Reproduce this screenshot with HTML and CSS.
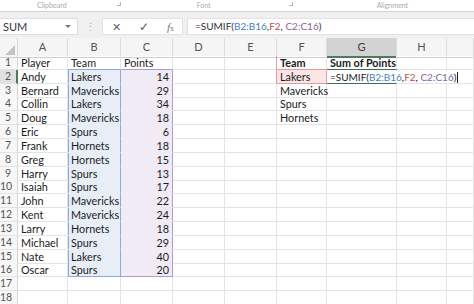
FILE: index.html
```html
<!DOCTYPE html>
<html lang="en">
<head>
    <meta charset="UTF-8">
    <title>SUMIF</title>
    <link rel="stylesheet" href="styles.css">
</head>
<body>
<div class="ribbon">
    <span class="group-label clip">Clipboard</span>
    <span class="launcher l1"></span>
    <span class="group-label font">Font</span>
    <span class="launcher l2"></span>
    <span class="group-label align">Alignment</span>
</div>

<div class="formula-bar">
    <div class="name-box">SUM<span class="arrow"></span></div>
    <div class="dots">⋮</div>
    <div class="fx-buttons">
        <span class="cancel">✕</span>
        <span class="enter">✓</span>
        <span class="fx"><i>f</i><sub>x</sub></span>
    </div>
    <div class="formula-input">=SUMIF(<span class="ref-b">B2:B16</span>,<span class="ref-f">F2</span>, <span class="ref-c">C2:C16</span>)</div>
</div>

<div class="sheet">
    <div class="row head">
        <div class="corner"></div>
        <div class="ch">A</div><div class="ch">B</div><div class="ch">C</div><div class="ch">D</div>
        <div class="ch">E</div><div class="ch">F</div><div class="ch sel">G</div><div class="ch">H</div><div class="ch"></div>
    </div>
    <div class="row">
        <div class="rh">1</div>
        <div class="c">Player</div><div class="c rb-top">Team</div><div class="c rc-top">Points</div><div class="c"></div>
        <div class="c rf-left"></div><div class="c bold rf-top">Team</div><div class="c bold active-top">Sum of Points</div><div class="c"></div><div class="c"></div>
    </div>
    <div class="row">
        <div class="rh sel">2</div>
        <div class="c">Andy</div><div class="c rb">Lakers</div><div class="c rc num">14</div><div class="c"></div>
        <div class="c rf-left"></div><div class="c rf">Lakers</div>
        <div class="c editing"><span class="edit-box">=SUMIF(<span class="ref-b">B2:B16</span>,<span class="ref-f">F2</span>, <span class="ref-c">C2:C16</span>)<span class="caret"></span></span></div>
        <div class="c"></div><div class="c"></div>
    </div>
    <div class="row">
        <div class="rh">3</div>
        <div class="c">Bernard</div><div class="c rb">Mavericks</div><div class="c rc num">29</div><div class="c"></div>
        <div class="c"></div><div class="c">Mavericks</div><div class="c"></div><div class="c"></div><div class="c"></div>
    </div>
    <div class="row">
        <div class="rh">4</div>
        <div class="c">Collin</div><div class="c rb">Lakers</div><div class="c rc num">34</div><div class="c"></div>
        <div class="c"></div><div class="c">Spurs</div><div class="c"></div><div class="c"></div><div class="c"></div>
    </div>
    <div class="row">
        <div class="rh">5</div>
        <div class="c">Doug</div><div class="c rb">Mavericks</div><div class="c rc num">18</div><div class="c"></div>
        <div class="c"></div><div class="c">Hornets</div><div class="c"></div><div class="c"></div><div class="c"></div>
    </div>
    <div class="row">
        <div class="rh">6</div>
        <div class="c">Eric</div><div class="c rb">Spurs</div><div class="c rc num">6</div><div class="c"></div>
        <div class="c"></div><div class="c"></div><div class="c"></div><div class="c"></div><div class="c"></div>
    </div>
    <div class="row">
        <div class="rh">7</div>
        <div class="c">Frank</div><div class="c rb">Hornets</div><div class="c rc num">18</div><div class="c"></div>
        <div class="c"></div><div class="c"></div><div class="c"></div><div class="c"></div><div class="c"></div>
    </div>
    <div class="row">
        <div class="rh">8</div>
        <div class="c">Greg</div><div class="c rb">Hornets</div><div class="c rc num">15</div><div class="c"></div>
        <div class="c"></div><div class="c"></div><div class="c"></div><div class="c"></div><div class="c"></div>
    </div>
    <div class="row">
        <div class="rh">9</div>
        <div class="c">Harry</div><div class="c rb">Spurs</div><div class="c rc num">13</div><div class="c"></div>
        <div class="c"></div><div class="c"></div><div class="c"></div><div class="c"></div><div class="c"></div>
    </div>
    <div class="row">
        <div class="rh">10</div>
        <div class="c">Isaiah</div><div class="c rb">Spurs</div><div class="c rc num">17</div><div class="c"></div>
        <div class="c"></div><div class="c"></div><div class="c"></div><div class="c"></div><div class="c"></div>
    </div>
    <div class="row">
        <div class="rh">11</div>
        <div class="c">John</div><div class="c rb">Mavericks</div><div class="c rc num">22</div><div class="c"></div>
        <div class="c"></div><div class="c"></div><div class="c"></div><div class="c"></div><div class="c"></div>
    </div>
    <div class="row">
        <div class="rh">12</div>
        <div class="c">Kent</div><div class="c rb">Mavericks</div><div class="c rc num">24</div><div class="c"></div>
        <div class="c"></div><div class="c"></div><div class="c"></div><div class="c"></div><div class="c"></div>
    </div>
    <div class="row">
        <div class="rh">13</div>
        <div class="c">Larry</div><div class="c rb">Hornets</div><div class="c rc num">18</div><div class="c"></div>
        <div class="c"></div><div class="c"></div><div class="c"></div><div class="c"></div><div class="c"></div>
    </div>
    <div class="row">
        <div class="rh">14</div>
        <div class="c">Michael</div><div class="c rb">Spurs</div><div class="c rc num">29</div><div class="c"></div>
        <div class="c"></div><div class="c"></div><div class="c"></div><div class="c"></div><div class="c"></div>
    </div>
    <div class="row">
        <div class="rh">15</div>
        <div class="c">Nate</div><div class="c rb">Lakers</div><div class="c rc num">40</div><div class="c"></div>
        <div class="c"></div><div class="c"></div><div class="c"></div><div class="c"></div><div class="c"></div>
    </div>
    <div class="row">
        <div class="rh">16</div>
        <div class="c">Oscar</div><div class="c rb last">Spurs</div><div class="c rc last num">20</div><div class="c"></div>
        <div class="c"></div><div class="c"></div><div class="c"></div><div class="c"></div><div class="c"></div>
    </div>
    <div class="row">
        <div class="rh">17</div>
        <div class="c"></div><div class="c"></div><div class="c"></div><div class="c"></div>
        <div class="c"></div><div class="c"></div><div class="c"></div><div class="c"></div><div class="c"></div>
    </div>
    <div class="row">
        <div class="rh">18</div>
        <div class="c"></div><div class="c"></div><div class="c"></div><div class="c"></div>
        <div class="c"></div><div class="c"></div><div class="c"></div><div class="c"></div><div class="c"></div>
    </div>
</div>
</body>
</html>
```

FILE: styles.css
```css
* {
    box-sizing: border-box;
}

body {
    margin: 0;
    width: 474px;
    height: 304px;
    overflow: hidden;
    background: #fff;
    font-family: Lato, "Liberation Sans", sans-serif;
    font-size: 10.8px;
    color: #1c1c1c;
}

/* ribbon group labels */
.ribbon {
    height: 12px;
    border-bottom: 1px solid #d4d4d4;
    display: flex;
    align-items: flex-start;
    color: #aaa;
    font-size: 7px;
    line-height: 8px;
}

.group-label {
    margin-top: 1px;
}

.clip {
    margin-left: 37px;
}

.launcher {
    width: 4px;
    height: 4px;
    margin-top: 2px;
    border-right: 1px solid #b5b5b5;
    border-bottom: 1px solid #b5b5b5;
}

.l1 {
    margin-left: 50px;
}

.font {
    margin-left: 76px;
}

.l2 {
    margin-left: 78px;
}

.align {
    margin-left: 84px;
}

/* formula bar */
.formula-bar {
    height: 26px;
    background: #f0f0f0;
    display: flex;
    padding-top: 6px;
}

.name-box {
    width: 78px;
    height: 17px;
    background: #fff;
    border: 1px solid #dedede;
    border-left: none;
    display: flex;
    align-items: center;
    padding-left: 3px;
    color: #333;
    font-size: 11px;
}

.arrow {
    margin-left: auto;
    margin-right: 6px;
    width: 0;
    height: 0;
    border-left: 3px solid transparent;
    border-right: 3px solid transparent;
    border-top: 3px solid #777;
}

.dots {
    width: 24px;
    text-align: center;
    color: #b0b0b0;
    font-size: 11px;
    line-height: 17px;
}

.fx-buttons {
    width: 81px;
    height: 17px;
    background: #fff;
    border: 1px solid #e2e2e2;
    display: grid;
    grid-template-columns: 27px 27px 27px;
    align-items: center;
    text-align: center;
    color: #5e5e5e;
}

.cancel {
    font-size: 11px;
}

.enter {
    font-size: 12px;
}

.fx {
    font-family: "Liberation Serif", serif;
    font-size: 11px;
    color: #777;
}

.fx sub {
    font-size: 8px;
    vertical-align: 0;
}

.formula-input {
    width: 287px;
    height: 17px;
    margin-left: 4px;
    background: #fff;
    border: 1px solid #e2e2e2;
    border-right: none;
    padding-left: 7px;
    line-height: 15px;
    font-size: 10px;
    color: #333;
}

.ref-b {
    color: #4a7ebb;
}

.ref-f {
    color: #c0504d;
}

.ref-c {
    color: #8064a2;
}

/* sheet grid */
.row {
    display: grid;
    grid-template-columns: 18px 50px 53px 52px 52px 52px 50px 70px 50px 27px;
    height: 13.84px;
}

.row.head {
    height: 18px;
    background: #f5f5f5;
}

.corner {
    border-right: 1px solid #d8d8d8;
    border-bottom: 1px solid #cfcfcf;
    position: relative;
}

.corner::after {
    content: "";
    position: absolute;
    right: 2px;
    bottom: 2px;
    border-left: 10px solid transparent;
    border-bottom: 10px solid #c4c4c4;
}

.ch {
    border-right: 1px solid #dcdcdc;
    border-bottom: 1px solid #cfcfcf;
    text-align: center;
    line-height: 18px;
    color: #555;
    font-size: 11px;
}

.ch.sel {
    background: #d3d3d3;
    border-bottom: 2px solid #4f7a62;
    color: #3b3b3b;
}

.rh {
    background: #f7f7f7;
    border-right: 1px solid #d6d6d6;
    border-bottom: 1px solid #e3e3e3;
    text-align: right;
    padding-right: 6px;
    line-height: 13px;
    color: #555;
    font-size: 10.5px;
}

.rh.sel {
    background: #e0e0e0;
    border-right: 2px solid #4f7a62;
    padding-right: 5px;
}

.c {
    border-right: 1px solid #e4e4e4;
    border-bottom: 1px solid #e4e4e4;
    padding: 0 3px;
    line-height: 13px;
    white-space: nowrap;
}

.bold {
    font-weight: bold;
}

.num {
    text-align: right;
}

/* referenced ranges */
.rb-top {
    border-bottom-color: #8eaadb;
}

.rc-top {
    border-bottom-color: #ad9ccf;
}

.rb {
    background: #e8eef8;
    border-bottom-color: #e8eef8;
    border-right-color: #8eaadb;
    box-shadow: inset 1px 0 0 #8eaadb;
}

.rc {
    background: #f1ebf6;
    border-bottom-color: #f1ebf6;
    border-right-color: #ad9ccf;
}

.rb.last {
    border-bottom-color: #8eaadb;
}

.rc.last {
    border-bottom-color: #ad9ccf;
}

.rf-top {
    border-bottom-color: #e39c9c;
}

.rf-left {
    border-right-color: #e39c9c;
}

.rf {
    background: #fbe5e5;
    border-right-color: #e39c9c;
    border-bottom-color: #e39c9c;
}

.bold.active-top {
    border-bottom: 1px solid #3d6e57;
}

.editing {
    position: relative;
    z-index: 2;
    overflow: visible;
    border-bottom: 1px solid #3d6e57;
    padding: 0;
}

.edit-box {
    display: inline-block;
    background: #fff;
    padding: 0 2px 0 3px;
    height: 12px;
    font-size: 10px;
}

.caret {
    display: inline-block;
    width: 1px;
    height: 11px;
    margin-left: 1px;
    vertical-align: -2px;
    background: #222;
}
```
